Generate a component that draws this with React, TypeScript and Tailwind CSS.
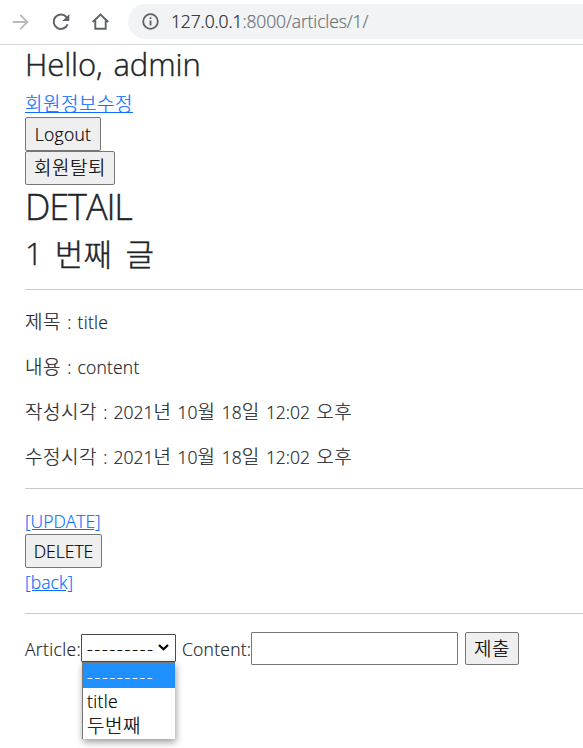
import type { ReactNode } from "react";

function K({ children, className = "text-[19px] tracking-[0.52px]" }: { children: ReactNode; className?: string }) {
  return <span className={`font-['Noto_Sans_CJK_KR',sans-serif] font-light leading-none ${className}`}>{children}</span>;
}

function Button({ children, className }: { children: ReactNode; className: string }) {
  return (
    <button className={`flex items-center justify-center whitespace-nowrap rounded-[2px] border border-[#767676] bg-[#efefef] text-black ${className}`}>
      {children}
    </button>
  );
}

function Toolbar() {
  return (
    <header className="flex h-[45px] items-center border-b border-[#dadce0] pb-px">
      <svg className="ml-3 shrink-0" width="17" height="16" viewBox="0 0 17 16" fill="none" stroke="#bababa" strokeWidth="1.9">
        <path d="M.7 8h15M8.3 .9 15.4 8l-7.1 7.1" />
      </svg>
      <svg className="ml-[23px] shrink-0" width="18" height="18" viewBox="0 0 18 18" fill="none" stroke="#5f6368" strokeWidth="2">
        <path d="M15.6 11.4A7.2 7.2 0 1 1 14.5 4.2" />
        <path d="M17.3 1v7h-7z" fill="#5f6368" stroke="none" />
      </svg>
      <svg className="ml-[22px] shrink-0" width="17" height="17" viewBox="0 0 17 17" fill="none" stroke="#5f6368" strokeWidth="1.9">
        <path d="M.7 9 8.5 1.5 16.3 9M3.3 7.5v8.2h10.4V7.5" />
      </svg>
      <div className="ml-[19px] flex h-[35px] flex-1 items-center rounded-l-full bg-[#f1f3f4] pl-3.5">
        <svg width="17" height="17" viewBox="0 0 17 17" fill="none" stroke="#5f6368" strokeWidth="1.8">
          <circle cx="8.5" cy="8.5" r="7.3" />
          <path d="M8.5 7.5v5M8.5 4.3v1.8" />
        </svg>
        <span className="ml-3 whitespace-nowrap font-['Open_Sans',sans-serif] text-[17.5px] tracking-[-0.12px] text-[#202124] [-webkit-text-stroke:0.2px]">
          127.0.0.1<span className="text-[#6b6f73]">:8000/articles/1/</span>
        </span>
      </div>
    </header>
  );
}

export default function App() {
  return (
    <div className="h-[748px] w-full overflow-hidden bg-white font-['Open_Sans','Noto_Sans_CJK_KR',sans-serif] text-[17.5px] font-light leading-[27px] text-[#212529] [-webkit-text-stroke:0.2px]">
      <Toolbar />
      <main className="whitespace-nowrap pl-[25px]">
        <h2 className="flex h-[45px] items-center pb-1.5 text-[31px] font-light [word-spacing:3px] tracking-[-0.1px] [-webkit-text-stroke:0.4px]">Hello, admin</h2>
        <a className="flex h-[27px] w-[108px] items-center pb-0.5 text-[#0d6efd] underline"><K>회원정보수정</K></a>
        <Button className="h-[34px] w-[76px] tracking-[0.3px]">Logout</Button>
        <Button className="h-[34px] w-[90px] pb-[3px]"><K>회원탈퇴</K></Button>
        <h1 className="flex h-[45px] items-center pb-0.5 text-[36px] font-light tracking-[-1.1px] [-webkit-text-stroke:0.4px]">DETAIL</h1>
        <h2 className="flex h-[59px] items-center gap-[13px] pb-3.5 text-[31px] font-light [-webkit-text-stroke:0.4px]">
          <span className="-mr-px pt-0.5">1</span><K className="text-[31px] tracking-[0.4px]">번째</K><K className="text-[31px]">글</K>
        </h2>
        <hr className="border-[#c8c9ca]" />
        <div className="flex h-[198px] flex-col gap-[18px] pt-[19px] [word-spacing:1.6px]">
          <p><K>제목</K> : <span className="tracking-[0.3px]">title</span></p>
          <p><K>내용</K> : <span className="tracking-[0.2px]">content</span></p>
          <p><K>작성시각</K> : 2021<K>년</K> 10<K>월</K> 18<K>일</K> 12:02 <K>오후</K></p>
          <p><K>수정시각</K> : 2021<K>년</K> 10<K>월</K> 18<K>일</K> 12:02 <K>오후</K></p>
        </div>
        <hr className="border-[#c8c9ca]" />
        <div className="h-[124px] pt-[18px]">
          <a className="block h-[27px] w-fit pt-px text-[#0d6efd] underline">[UPDATE]</a>
          <Button className="h-[34px] w-[77px]">DELETE</Button>
          <a className="block h-[27px] w-fit pt-px text-[#0d6efd] underline tracking-[0.1px]">[back]</a>
        </div>
        <hr className="border-[#c8c9ca]" />
        <form className="mt-[18px] flex h-[33px] items-center">
          <label className="w-[56px] pt-0.5 tracking-[0.35px]">Article:</label>
          <div className="relative -top-px h-7 w-[95px] rounded-[1px] border border-[#4b4b4b] bg-white text-black">
            <div className="flex h-full items-center justify-between pl-[5px] pr-1.5">
              <span className="pt-1 tracking-[1.9px]">---------</span>
              <svg className="-ml-2 shrink-0" width="11" height="7" viewBox="0 0 11 7" fill="none" stroke="black" strokeWidth="2.2"><path d="m1 1 4.5 4.3L10 1" /></svg>
            </div>
            <ul className="absolute left-0 top-[27px] h-[77px] w-[93px] border-l border-t border-[#767676] bg-white shadow-[1px_3px_7px_rgba(0,0,0,0.4)]">
              <li className="h-[25px] bg-[#1e90ff] pl-1 pt-0.5 leading-[25px] text-white tracking-[1.85px]">---------</li>
              <li className="h-[26px] pl-1 leading-[27px] tracking-[0.35px]">title</li>
              <li className="flex h-[21px] items-center pl-1 leading-5"><K>두번째</K></li>
            </ul>
          </div>
          <label className="ml-[6px] w-[69px] pt-0.5 tracking-[0.25px]">Content:</label>
          <input className="h-[33px] w-[207px] rounded-[1px] border border-[#767676] bg-white" />
          <Button className="ml-[7px] h-[33px] w-[54px] pb-[3px]"><K>제출</K></Button>
        </form>
      </main>
    </div>
  );
}
